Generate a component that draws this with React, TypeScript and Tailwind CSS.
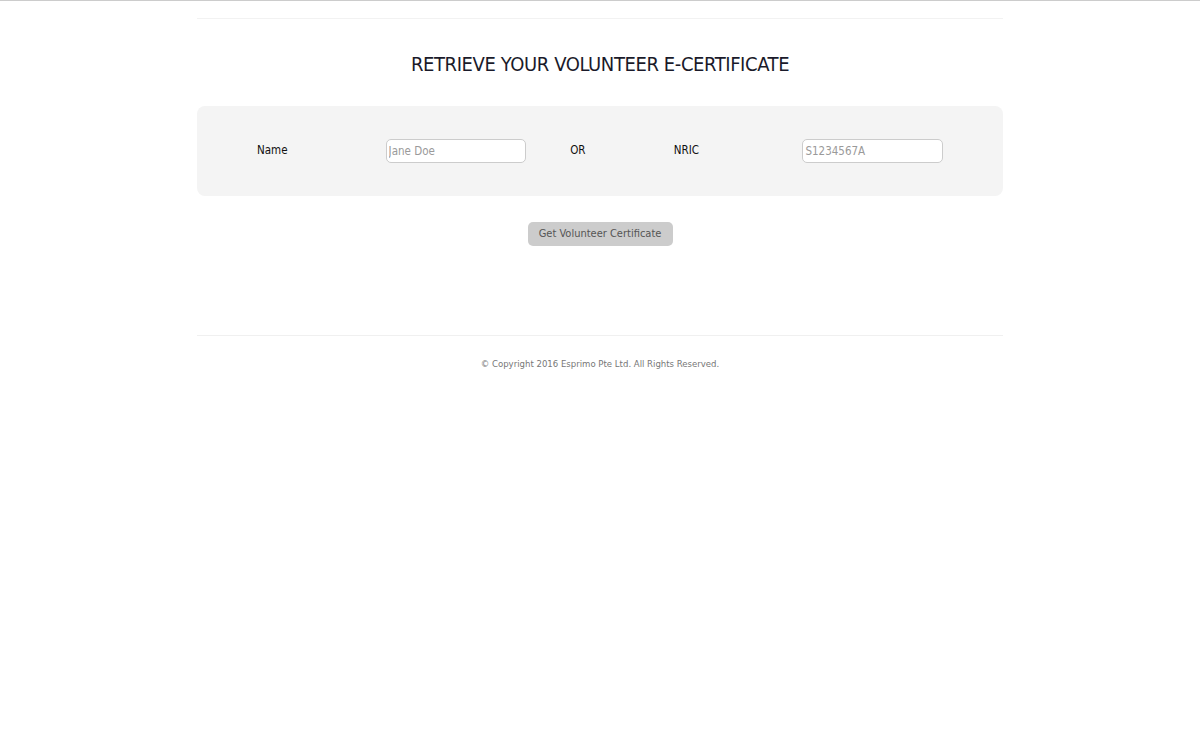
export default function App() {
  const font = { fontFamily: '"Liberation Sans Narrow", "DejaVu Sans Condensed", "Liberation Sans", sans-serif' };

  return (
    <div className="min-h-[750px] w-full bg-white border-t border-[#cccccc]" style={font}>
      <div className="mx-auto w-[806px] pt-[17px]">
        <div className="border-t border-[#f2f2f2]" />

        <h1 className="mt-[33px] text-center text-[20px] leading-[24px] tracking-[-0.4px] text-[#1a1a2a]">
          RETRIEVE YOUR VOLUNTEER E-CERTIFICATE
        </h1>

        <div className="mt-[30px] h-[90px] rounded-lg bg-[#f4f4f4] flex items-center px-[60px] text-[11.5px] text-[#111]">
          <span className="w-[129px]">Name</span>
          <input
            className="w-[141px] h-[24px] rounded-[5px] border border-[#cccccc] bg-white px-[2px] text-[11.5px] placeholder:text-[#9a9a9a] outline-none"
            placeholder="Jane Doe"
          />
          <span className="ml-[44px] w-[104px]">OR</span>
          <span className="w-[129px]">NRIC</span>
          <input
            className="w-[141px] h-[24px] rounded-[5px] border border-[#cccccc] bg-white px-[2px] text-[11.5px] placeholder:text-[#9a9a9a] outline-none"
            placeholder="S1234567A"
          />
        </div>

        <div className="mt-[26px] flex justify-center">
          <button className="h-[24px] w-[145px] whitespace-nowrap rounded-[5px] bg-[#cccccc] text-[11px] text-[#555555]">
            Get Volunteer Certificate
          </button>
        </div>

        <div className="mt-[89px] border-t border-[#f0f0f0]" />

        <p className="mt-[21px] text-center text-[9.5px] text-[#777777]">
          © Copyright 2016 Esprimo Pte Ltd. All Rights Reserved.
        </p>
      </div>
    </div>
  );
}
